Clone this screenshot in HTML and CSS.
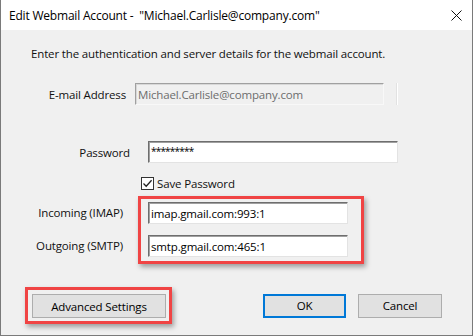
FILE: index.html
```html
<!DOCTYPE html>
<html lang="en">
<head>
    <meta charset="utf-8">
    <title>Edit Webmail Account</title>
    <link rel="stylesheet" href="styles.css">
</head>
<body>
    <div class="window">
        <div class="titlebar">
            <span class="title">Edit Webmail Account - &nbsp;"Michael.Carlisle@company.com"</span>
            <svg class="close" width="11" height="11" viewBox="0 0 11 11">
                <path d="M0.5 0.5 L10.5 10.5 M10.5 0.5 L0.5 10.5" stroke="#111" stroke-width="1" fill="none"/>
            </svg>
        </div>

        <div class="content">
            <p class="intro">Enter the authentication and server details for the webmail account.</p>

            <div class="row row-email">
                <label class="label">E-mail Address</label>
                <input class="field field-disabled" type="text" value="Michael.Carlisle@company.com" disabled>
                <span class="ghost-edge"></span>
            </div>

            <div class="row row-password">
                <label class="label">Password</label>
                <input class="field field-password" type="text" value="*********">
            </div>

            <div class="check-row">
                <span class="checkbox">
                    <svg width="11" height="11" viewBox="0 0 11 11">
                        <path d="M1.5 5.5 L4.2 8.2 L9.6 2.3" stroke="#222" stroke-width="1.3" fill="none"/>
                    </svg>
                </span>
                <span>Save Password</span>
            </div>

            <div class="server-group">
                <div class="server-labels">
                    <span class="server-label">Incoming (IMAP)</span>
                    <span class="server-label">Outgoing (SMTP)</span>
                </div>
                <div class="highlight server-box">
                    <input class="field field-server" type="text" value="imap.gmail.com:993:1">
                    <input class="field field-server" type="text" value="smtp.gmail.com:465:1">
                </div>
            </div>

            <div class="footer">
                <div class="highlight adv-box">
                    <button class="btn btn-adv">Advanced Settings</button>
                </div>
                <div class="actions">
                    <button class="btn btn-default">OK</button>
                    <button class="btn">Cancel</button>
                </div>
            </div>
        </div>
    </div>
</body>
</html>
```

FILE: styles.css
```css
* {
    box-sizing: border-box;
}
body {
    margin: 0;
    font-family: "Segoe UI", "Open Sans", sans-serif;
    font-size: 11.5px;
    letter-spacing: -0.15px;
    color: #111;
    background-color: #ffffff;
}
.window {
    width: 473px;
    height: 336px;
    border: 1px solid #7a7a7a;
    border-top: none;
    background-color: #f0f0f0;
    display: flex;
    flex-direction: column;
}
.titlebar {
    height: 30px;
    background-color: #ffffff;
    display: flex;
    align-items: center;
    justify-content: space-between;
    padding: 0 10px 0 8px;
}
.title {
    color: #000;
    font-size: 12px;
    letter-spacing: -0.2px;
}
.close {
    display: block;
}
.content {
    flex: 1;
    padding-top: 16px;
}
.intro {
    margin: 0 0 21px 30px;
    line-height: 16px;
}
.row {
    display: flex;
    align-items: center;
    height: 22px;
}
.label {
    text-align: right;
}
.row-email .label {
    width: 125px;
    margin-right: 9px;
}
.row-password {
    margin-top: 36px;
}
.row-password .label {
    width: 129px;
    margin-right: 18px;
}
.field {
    height: 22px;
    margin: 0;
    padding: 0 2px;
    font-family: inherit;
    font-size: inherit;
    letter-spacing: inherit;
    color: #000;
    background-color: #ffffff;
    border: 1px solid;
    border-color: #6e6e6e #e3e3e3 #e3e3e3 #6e6e6e;
    box-shadow: inset 1px 1px 0 #a0a0a0;
    outline: none;
}
.row-email .field {
    width: 249px;
}
.row-password .field {
    width: 250px;
}
.field-password {
    font-size: 10px;
    letter-spacing: -0.8px;
    padding-bottom: 3px;
}
.field-disabled {
    background-color: #f0f0f0;
    color: #6d6d6d;
    border-color: #a0a0a0 #f8f8f8 #f8f8f8 #a0a0a0;
    box-shadow: inset 1px 1px 0 #d8d8d8;
}
.ghost-edge {
    width: 2px;
    height: 22px;
    margin-left: 12px;
    border-left: 1px solid #e2e2e2;
    border-right: 1px solid #ffffff;
}
.check-row {
    display: flex;
    align-items: center;
    height: 16px;
    margin-top: 12px;
    padding-left: 140px;
    gap: 3px;
}
.checkbox {
    width: 13px;
    height: 13px;
    border: 1px solid #333;
    background-color: #ffffff;
    display: flex;
    align-items: center;
    justify-content: center;
}
.checkbox svg {
    display: block;
}
.server-group {
    display: flex;
    margin-top: 5px;
}
.server-labels {
    width: 122px;
    margin-right: 15px;
    padding-top: 6px;
    display: flex;
    flex-direction: column;
    gap: 11px;
}
.server-label {
    height: 22px;
    line-height: 22px;
    text-align: right;
}
.highlight {
    border: 3px solid #f04444;
    box-shadow: 2px 3px 5px rgba(0, 0, 0, 0.35);
}
.server-box {
    width: 226px;
    padding: 3px 13px 4px 7px;
    display: flex;
    flex-direction: column;
    gap: 11px;
}
.field-server {
    width: 200px;
}
.footer {
    display: flex;
    align-items: center;
    margin-top: 23px;
    padding-left: 24px;
}
.adv-box {
    padding: 4px 3px 3px 4px;
}
.actions {
    display: flex;
    gap: 12px;
    margin-left: auto;
    margin-right: 30px;
}
.btn {
    height: 24px;
    margin: 0;
    padding: 0;
    font-family: inherit;
    font-size: inherit;
    letter-spacing: inherit;
    color: #000;
    background-color: #e1e1e1;
    border: 1px solid #adadad;
    width: 84px;
}
.btn-adv {
    width: 134px;
    display: block;
}
.btn-default {
    width: 83px;
    border: 2px solid #0078d7;
}
```
